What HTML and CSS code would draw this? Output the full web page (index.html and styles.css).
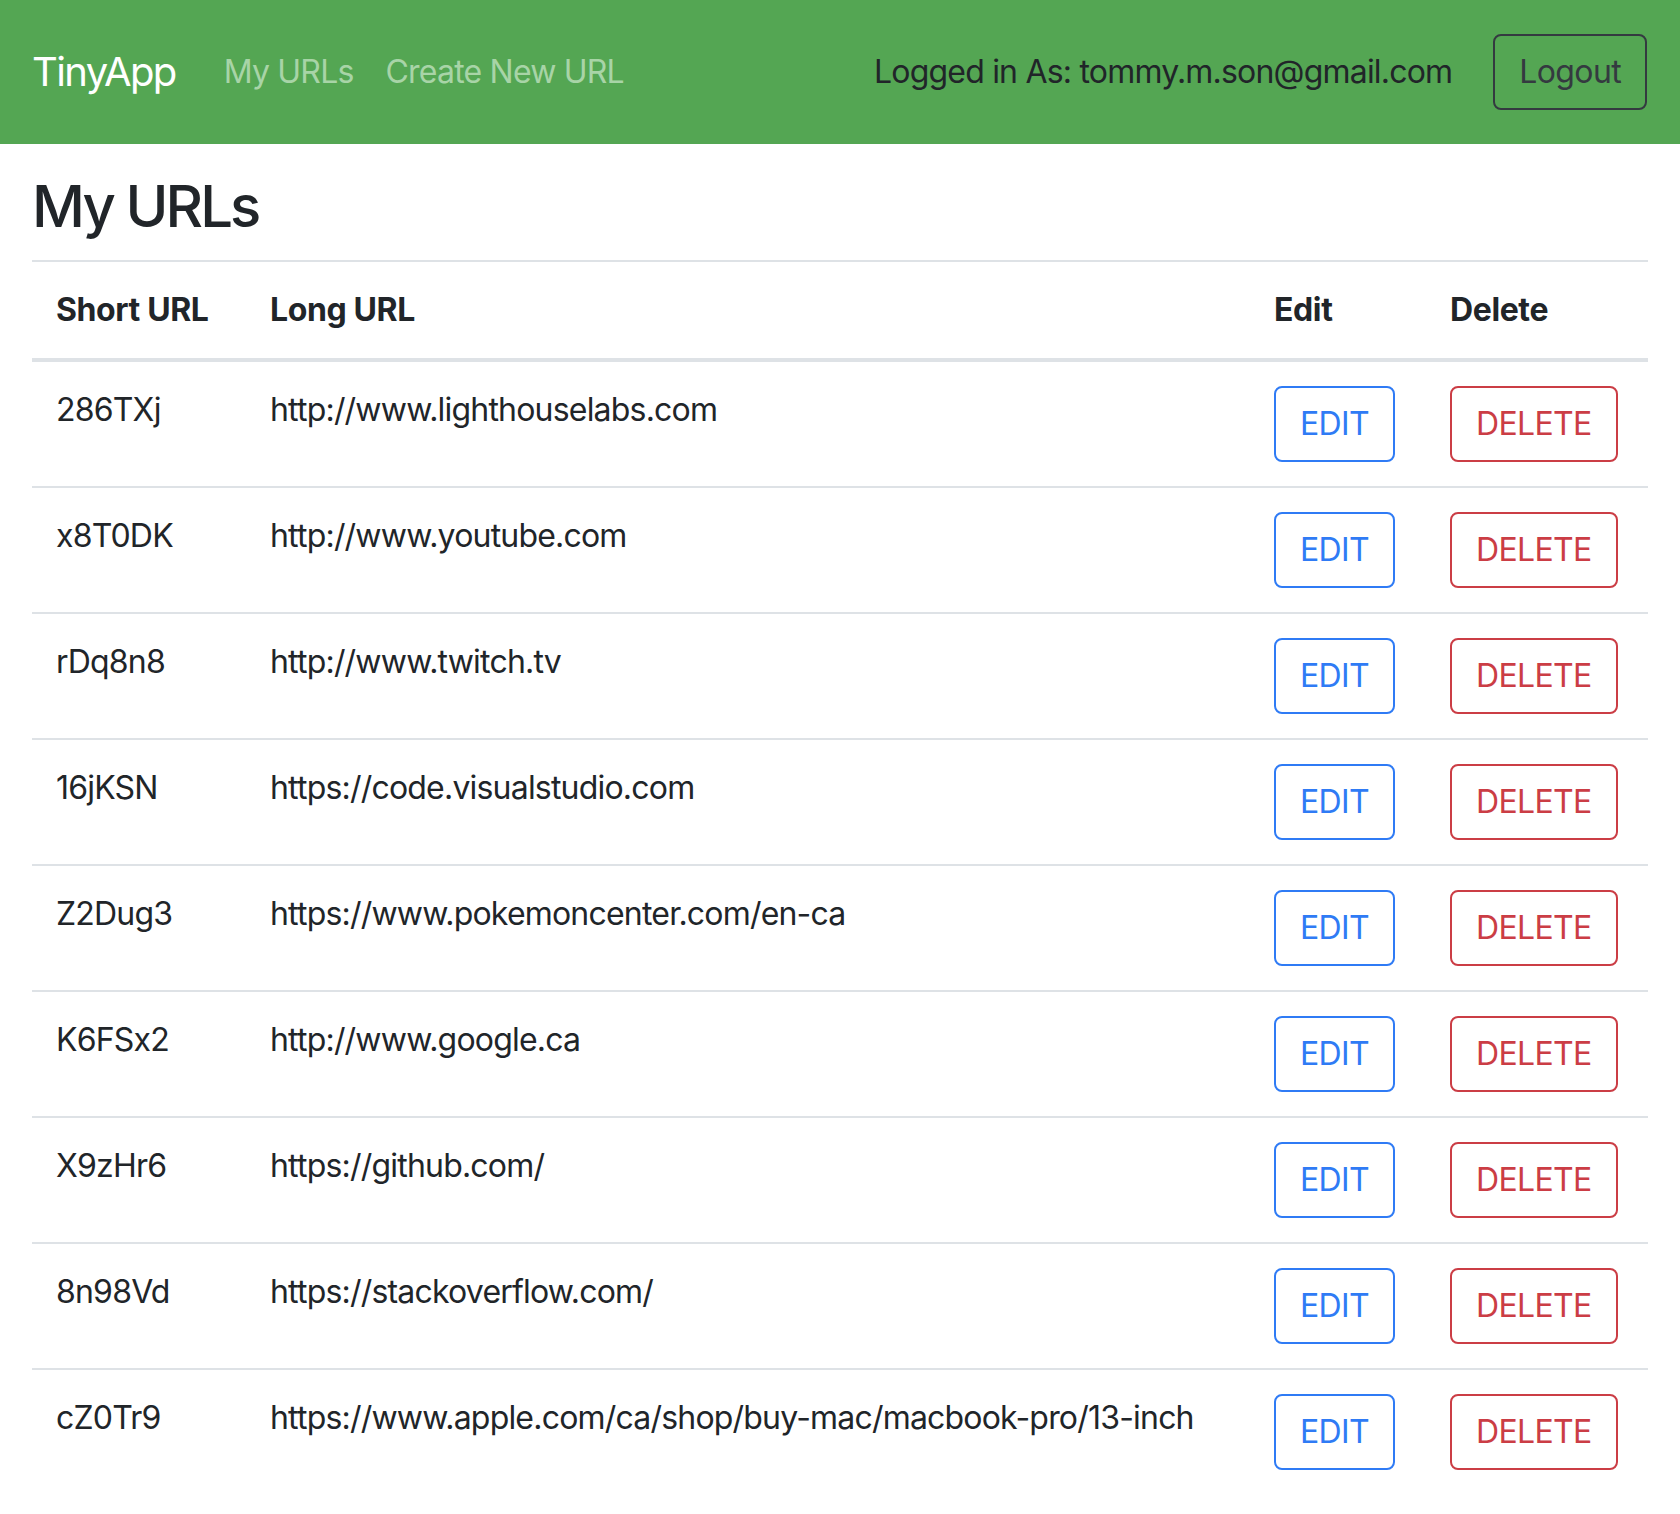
FILE: index.html
```html
<!DOCTYPE html>
<html lang="en">
<head>
<meta charset="utf-8">
<title>TinyApp</title>
<link rel="stylesheet" href="styles.css">
</head>
<body>
<nav class="navbar">
  <a class="brand" href="#">TinyApp</a>
  <div class="nav-links">
    <a class="nav-link" href="#">My URLs</a>
    <a class="nav-link" href="#">Create New URL</a>
  </div>
  <div class="nav-right">
    <span class="nav-text">Logged in As: tommy.m.son@gmail.com</span>
    <button class="btn btn-dark-outline">Logout</button>
  </div>
</nav>
<main class="content">
  <h2 class="title">My URLs</h2>
  <table class="url-table">
    <colgroup>
      <col class="c-short"><col class="c-long"><col class="c-edit"><col class="c-delete">
    </colgroup>
    <thead>
      <tr><th>Short URL</th><th>Long URL</th><th>Edit</th><th>Delete</th></tr>
    </thead>
    <tbody>
      <tr><td>286TXj</td><td>http://www.lighthouselabs.com</td><td><button class="btn btn-edit">EDIT</button></td><td><button class="btn btn-delete">DELETE</button></td></tr>
      <tr><td>x8T0DK</td><td>http://www.youtube.com</td><td><button class="btn btn-edit">EDIT</button></td><td><button class="btn btn-delete">DELETE</button></td></tr>
      <tr><td>rDq8n8</td><td>http://www.twitch.tv</td><td><button class="btn btn-edit">EDIT</button></td><td><button class="btn btn-delete">DELETE</button></td></tr>
      <tr><td>16jKSN</td><td>https://code.visualstudio.com</td><td><button class="btn btn-edit">EDIT</button></td><td><button class="btn btn-delete">DELETE</button></td></tr>
      <tr><td>Z2Dug3</td><td>https://www.pokemoncenter.com/en-ca</td><td><button class="btn btn-edit">EDIT</button></td><td><button class="btn btn-delete">DELETE</button></td></tr>
      <tr><td>K6FSx2</td><td>http://www.google.ca</td><td><button class="btn btn-edit">EDIT</button></td><td><button class="btn btn-delete">DELETE</button></td></tr>
      <tr><td>X9zHr6</td><td>https://github.com/</td><td><button class="btn btn-edit">EDIT</button></td><td><button class="btn btn-delete">DELETE</button></td></tr>
      <tr><td>8n98Vd</td><td>https://stackoverflow.com/</td><td><button class="btn btn-edit">EDIT</button></td><td><button class="btn btn-delete">DELETE</button></td></tr>
      <tr><td>cZ0Tr9</td><td>https://www.apple.com/ca/shop/buy-mac/macbook-pro/13-inch</td><td><button class="btn btn-edit">EDIT</button></td><td><button class="btn btn-delete">DELETE</button></td></tr>
    </tbody>
  </table>
</main>
</body>
</html>
```
FILE: styles.css
```css
* { box-sizing: border-box; }
html, body { margin: 0; padding: 0; }
body {
  font-family: Inter, "Noto Sans", "Liberation Sans", sans-serif;
  font-size: 32px;
  line-height: 1.5;
  letter-spacing: -0.025em;
  color: #212529;
  background: #fff;
}
.navbar {
  display: flex;
  align-items: center;
  height: 144px;
  padding: 0 33px 0 32px;
  background: #54a653;
}
.brand {
  font-size: 40px;
  line-height: 1.5;
  letter-spacing: -0.04em;
  color: #fff;
  text-decoration: none;
  margin-right: 32px;
}
.nav-links { display: flex; }
.nav-link {
  color: #a8d4a7;
  text-decoration: none;
  padding: 0 16px;
}
.nav-right {
  margin-left: auto;
  display: flex;
  align-items: center;
  gap: 41px;
}
.nav-text { color: #212529; }
.btn {
  font-family: inherit;
  font-size: 32px;
  line-height: 48px;
  letter-spacing: -0.02em;
  padding: 12px 24px;
  border-radius: 8px;
  background: transparent;
  border: 2px solid;
  cursor: pointer;
}
.btn-dark-outline { color: #343a40; border-color: #343a40; }
.btn-edit { color: #2f7bf5; border-color: #2f7bf5; }
.btn-delete { color: #cb3d45; border-color: #cb3d45; }
.content { padding: 0 32px; }
.title {
  font-size: 58px;
  font-weight: 500;
  line-height: 75px;
  letter-spacing: -0.05em;
  margin: 25px 0 16px;
}
.url-table {
  width: 100%;
  border-collapse: collapse;
}
.c-short { width: 214px; }
.c-edit { width: 176px; }
.c-delete { width: 222px; }
.url-table th, .url-table td {
  text-align: left;
  vertical-align: top;
  padding: 24px;
  border-top: 2px solid #dee2e6;
  white-space: nowrap;
}
.url-table th { font-weight: 700; letter-spacing: -0.012em; }
.url-table thead th { border-bottom: 4px solid #dee2e6; }
```
